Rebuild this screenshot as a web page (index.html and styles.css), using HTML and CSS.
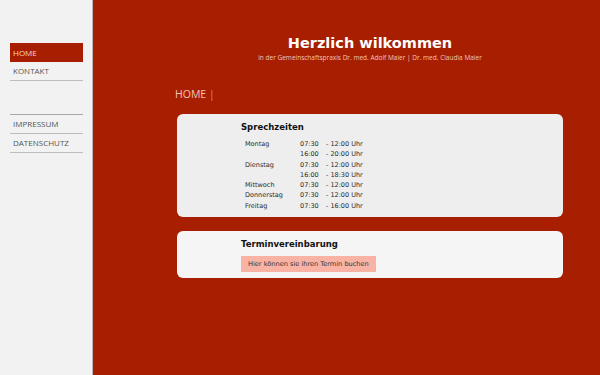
FILE: index.html
```html
<!DOCTYPE html>
<html lang="de">
<head>
    <meta charset="UTF-8">
    <meta name="viewport" content="width=device-width, initial-scale=1.0">
    <title>Gemeinschaftspraxis</title>
    <link rel="stylesheet" href="styles.css">
</head>
<body>
<div class="page">
    <aside class="sidebar">
        <ul class="nav">
            <li class="active">HOME</li>
            <li>KONTAKT</li>
        </ul>
        <ul class="nav nav-legal">
            <li>IMPRESSUM</li>
            <li>DATENSCHUTZ</li>
        </ul>
    </aside>

    <main class="main">
        <header class="header">
            <h1>Herzlich wilkommen</h1>
            <p>in der Gemeinschaftspraxis Dr. med. Adolf Maier | Dr. med. Claudia Maier</p>
        </header>

        <div class="crumb">HOME <span class="bar">|</span></div>

        <section class="card card-hours">
            <h2>Sprechzeiten</h2>
            <table class="hours">
                <tr><td class="day">Montag</td><td class="from">07:30</td><td class="to">- 12:00 Uhr</td></tr>
                <tr><td class="day"></td><td class="from">16:00</td><td class="to">- 20:00 Uhr</td></tr>
                <tr><td class="day">Dienstag</td><td class="from">07:30</td><td class="to">- 12:00 Uhr</td></tr>
                <tr><td class="day"></td><td class="from">16:00</td><td class="to">- 18:30 Uhr</td></tr>
                <tr><td class="day">Mittwoch</td><td class="from">07:30</td><td class="to">- 12:00 Uhr</td></tr>
                <tr><td class="day">Donnerstag</td><td class="from">07:30</td><td class="to">- 12:00 Uhr</td></tr>
                <tr><td class="day">Freitag</td><td class="from">07:30</td><td class="to">- 16:00 Uhr</td></tr>
            </table>
        </section>

        <section class="card card-booking">
            <h2>Terminvereinbarung</h2>
            <a class="book" href="#">Hier können sie ihren Termin buchen</a>
        </section>
    </main>
</div>
</body>
</html>
```

FILE: styles.css
```css
html, body {
  margin: 0;
  height: 100%;
}

body {
  font-family: "DejaVu Sans", sans-serif;
  color: #222;
  background-color: #a81e00;
}

.page {
  display: flex;
  min-height: 100%;
}

.sidebar {
  width: 93px;
  flex-shrink: 0;
  background-color: #f2f2f2;
  border-right: 1px solid #b9b9b9;
  padding-top: 43px;
  box-sizing: border-box;
}

.nav {
  list-style: none;
  margin: 0 0 0 10px;
  padding: 0;
  width: 73px;
}

.nav li {
  font-family: "Open Sans", sans-serif;
  font-size: 8px;
  color: #555;
  height: 18px;
  line-height: 18px;
  padding-left: 3px;
  border-bottom: 1.5px solid #bdbdbd;
}

.nav li.active {
  background-color: #a81e00;
  color: #f6d8cf;
  border-bottom: 0;
  height: 19px;
  line-height: 19px;
}

.nav-legal {
  margin-top: 33px;
  border-top: 1.5px solid #a8a8a8;
}

.main {
  flex: 1;
  padding: 0 37px 0 84px;
}

.header {
  text-align: center;
  color: #fff;
  padding-top: 35px;
}

.header h1 {
  margin: 0;
  font-size: 14.5px;
  font-weight: bold;
  line-height: 17px;
}

.header p {
  margin: 1px 0 0;
  font-family: "Open Sans", sans-serif;
  font-size: 6.5px;
  color: #f0c7bb;
}

.crumb {
  margin-top: 24px;
  margin-left: -2px;
  font-family: "Open Sans", sans-serif;
  font-size: 10.5px;
  line-height: 16px;
  color: #f3c4b6;
}

.crumb .bar {
  font-weight: 300;
}

.card {
  border-radius: 6px;
  padding: 7px 20px 0 64px;
  margin-top: 12px;
}

.card h2 {
  margin: 0;
  font-size: 8.5px;
  line-height: 12px;
  font-weight: bold;
  color: #111;
}

.card-hours {
  background-color: #eeeeee;
  height: 103px;
  box-sizing: border-box;
}

.hours {
  border-collapse: collapse;
  margin-top: 6px;
  margin-left: 4px;
  font-size: 6.5px;
  color: #2a2a2a;
}

.hours td {
  padding: 0;
  height: 10.3px;
  line-height: 10.3px;
  vertical-align: middle;
}

.hours .day {
  width: 55px;
}

.hours .from {
  width: 26px;
}

.card-booking {
  margin-top: 14px;
  background-color: #f5f5f5;
  height: 47px;
  box-sizing: border-box;
}

.book {
  display: inline-block;
  margin-top: 6px;
  padding: 0 7px;
  height: 16px;
  line-height: 16px;
  background-color: #f8b3a4;
  color: #333;
  font-size: 6.6px;
  text-decoration: none;
}
```
